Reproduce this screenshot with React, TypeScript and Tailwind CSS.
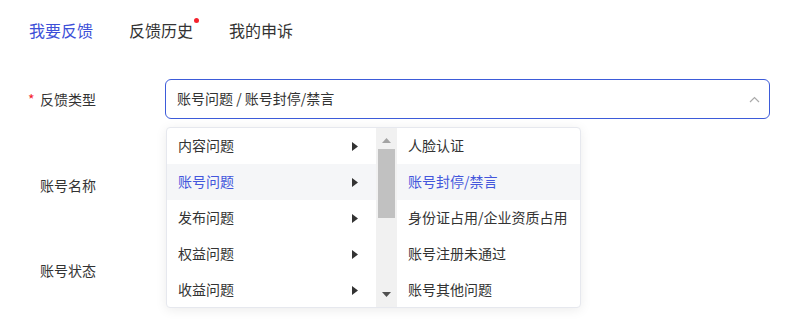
import { useState } from "react";

const primaryItems = ["内容问题", "账号问题", "发布问题", "权益问题", "收益问题"];
const subItems = ["人脸认证", "账号封停/禁言", "身份证占用/企业资质占用", "账号注册未通过", "账号其他问题"];

function Caret() {
  return (
    <svg width="6" height="9" viewBox="0 0 6 9" className="shrink-0">
      <path d="M0 0 L6 4.5 L0 9 Z" fill="#333" />
    </svg>
  );
}

function FormLabel({ text, required }: { text: string; required?: boolean }) {
  return (
    <div className="w-[165px] shrink-0 flex items-center pl-[28px] text-[14px] text-[#333]">
      <span className="w-[12px] text-[#f5222d]">{required ? "*" : ""}</span>
      <span>{text}</span>
    </div>
  );
}

export default function App() {
  const [tab, setTab] = useState(0);
  const tabs = ["我要反馈", "反馈历史", "我的申诉"];

  return (
    <div
      className="relative w-[795px] h-[321px] bg-white overflow-hidden"
      style={{ fontFamily: '"Noto Sans CJK SC", "Noto Sans", sans-serif' }}
    >
      {/* Tabs */}
      <div className="flex items-center gap-[36px] pl-[29px] pt-[18px] h-[42px]">
        {tabs.map((t, i) => (
          <button
            key={t}
            onClick={() => setTab(i)}
            className={`relative text-[16px] leading-[24px] ${tab === i ? "text-[#3d50d8]" : "text-[#333]"}`}
          >
            {t}
            {i === 1 && (
              <span className="absolute -right-[6px] top-[0px] w-[5px] h-[5px] rounded-full bg-[#f5222d]" />
            )}
          </button>
        ))}
      </div>

      {/* Form */}
      <div className="flex flex-col mt-[37px]">
        <div className="flex items-center h-[40px]">
          <FormLabel text="反馈类型" required />
          <div className="w-[605px] h-[40px] rounded-[6px] border border-[#3d5bd9] flex items-center justify-between pl-[11px] pr-[9px]">
            <span className="text-[14px] text-[#333] -mt-[1px]">账号问题 / 账号封停/禁言</span>
            <svg width="11" height="7" viewBox="0 0 11 7">
              <path d="M1 6 L5.5 1.5 L10 6" fill="none" stroke="#aaa" strokeWidth="1.2" />
            </svg>
          </div>
        </div>
        <div className="flex items-center h-[40px] mt-[46px]">
          <FormLabel text="账号名称" />
        </div>
        <div className="flex items-center h-[40px] mt-[45px]">
          <FormLabel text="账号状态" />
        </div>
      </div>

      {/* Cascader popover */}
      <div className="absolute left-[166px] top-[127px] w-[415px] h-[181px] flex bg-white border border-[#e6e8ee] rounded-[4px] shadow-[0_2px_12px_rgba(0,0,0,0.08)] overflow-hidden">
        <div className="w-[209px] flex flex-col">
          {primaryItems.map((p, i) => (
            <div
              key={p}
              className={`h-[36px] shrink-0 flex items-center justify-between pl-[11px] pr-[18px] text-[14px] ${
                i === 1 ? "bg-[#f5f6f8] text-[#4456dc]" : "text-[#333]"
              }`}
            >
              <span className="-mt-[2px]">{p}</span>
              <Caret />
            </div>
          ))}
        </div>
        {/* Scrollbar */}
        <div className="w-[21px] bg-[#f1f1f1] flex flex-col items-center">
          <div className="h-[21px] flex items-center justify-center pt-[3px]">
            <svg width="9" height="5" viewBox="0 0 9 5">
              <path d="M0 5 L4.5 0 L9 5 Z" fill="#a3a3a3" />
            </svg>
          </div>
          <div className="w-[17px] h-[69px] bg-[#c1c1c1]" />
          <div className="flex-1" />
          <div className="h-[21px] flex items-center justify-center pb-[4px]">
            <svg width="9" height="5" viewBox="0 0 9 5">
              <path d="M0 0 L4.5 5 L9 0 Z" fill="#505050" />
            </svg>
          </div>
        </div>
        <div className="flex-1 flex flex-col">
          {subItems.map((s, i) => (
            <div
              key={s}
              className={`h-[36px] shrink-0 flex items-center pl-[11px] text-[14px] ${
                i === 1 ? "bg-[#f5f6f8] text-[#4456dc]" : "text-[#333]"
              }`}
            >
              <span className="-mt-[2px]">{s}</span>
            </div>
          ))}
        </div>
      </div>
    </div>
  );
}
